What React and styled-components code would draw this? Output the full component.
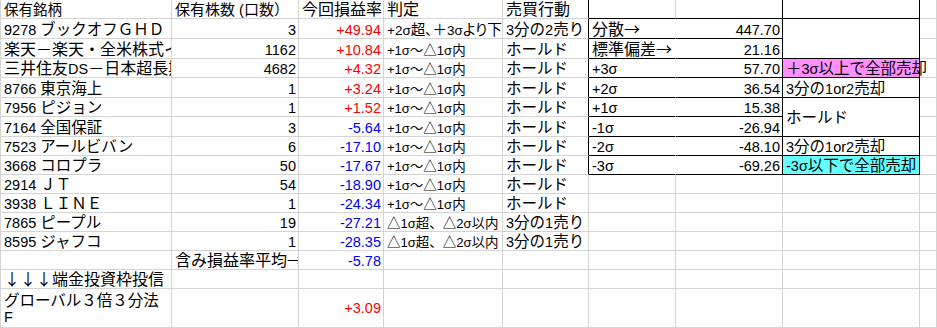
import React from 'react';
import styled, { createGlobalStyle } from 'styled-components';

const GRID = '#d4d4d4';
const K = '#000000';
const RED = '#ff0000';
const BLUE = '#0000ff';
const PINK = '#ff8fff';
const CYAN = '#66ffff';

const Global = createGlobalStyle`
  html, body { margin: 0; padding: 0; background: #ffffff; }
  body {
    font-family: "Liberation Sans", "Noto Sans CJK JP", sans-serif;
    font-size: 14.5px;
    color: #000;
  }
`;

const Sheet = styled.div`
  display: grid;
  width: 937px;
  height: 328px;
  box-sizing: border-box;
  border-left: 1px solid ${GRID};
  grid-template-columns: 171px 127px 85px 119px 86px 87px 107px 137px 1fr;
  grid-template-rows: 19px 20px 20px 19px 20px 19px 20px 19px 19px 19px 19px 19px 19px 19px 19px 39px;
  overflow: hidden;
`;

const Cell = styled.div`
  box-sizing: border-box;
  grid-row: span ${(p) => p.$rows || 1};
  display: flex;
  min-width: 0;
  align-items: ${(p) => (p.$v === 'center' ? 'center' : 'flex-end')};
  justify-content: ${(p) => (p.$align === 'right' ? 'flex-end' : 'flex-start')};
  padding: 0 2px 0 ${(p) => (p.$align === 'right' ? 2 : 3)}px;
  border-right: 1px solid ${(p) => p.$rb || GRID};
  border-bottom: 1px solid ${(p) => p.$bb || GRID};
  background: ${(p) => p.$bg || 'transparent'};
  color: ${(p) => p.$color || '#000'};
  font-size: ${(p) => p.$size || 14.5}px;
  line-height: ${(p) => p.$lh || 15}px;
  white-space: nowrap;
  overflow: ${(p) => (p.$spill ? 'visible' : 'hidden')};
`;

const Text = styled.span`
  display: block;
  flex: none;
  white-space: nowrap;
`;

const Wide = styled.span`
  font-family: "Noto Sans CJK JP", sans-serif;
  font-size: ${(p) => p.$size}px;
  font-feature-settings: ${(p) => (p.$palt ? '"palt" 1' : 'normal')};
`;

const CJK_RE = /([\u2190-\u21ff\u25a0-\u25ff\u3000-\u30ff\u4e00-\u9fff\uff00-\uffef]+)/;

const mix = (text, size = 15.5, palt = false) =>
  typeof text === 'string'
    ? text.split(CJK_RE).map((part, i) =>
        i % 2 ? (
          <Wide key={i} $size={size} $palt={palt}>
            {part}
          </Wide>
        ) : (
          part
        )
      )
    : text;

const c = (t, o = {}) => ({ t, ...o });

const stocks = [
  ['9278 ブックオフＧＨＤ', '3', '+49.94', RED, '+2σ超、＋3σより下', '3分の2売り'],
  ['楽天－楽天・全米株式インデックス・ファンド', '1162', '+10.84', RED, '+1σ～△1σ内', 'ホールド'],
  ['三井住友DS－日本超長期国債ファンド', '4682', '+4.32', RED, '+1σ～△1σ内', 'ホールド'],
  ['8766 東京海上', '1', '+3.24', RED, '+1σ～△1σ内', 'ホールド'],
  ['7956 ピジョン', '1', '+1.52', RED, '+1σ～△1σ内', 'ホールド'],
  ['7164 全国保証', '3', '-5.64', BLUE, '+1σ～△1σ内', 'ホールド'],
  ['7523 アールビバン', '6', '-17.10', BLUE, '+1σ～△1σ内', 'ホールド'],
  ['3668 コロプラ', '50', '-17.67', BLUE, '+1σ～△1σ内', 'ホールド'],
  ['2914 ＪＴ', '54', '-18.90', BLUE, '+1σ～△1σ内', 'ホールド'],
  ['3938 ＬＩＮＥ', '1', '-24.34', BLUE, '+1σ～△1σ内', 'ホールド'],
  ['7865 ピープル', '19', '-27.21', BLUE, '△1σ超、△2σ以内', '3分の1売り'],
  ['8595 ジャフコ', '1', '-28.35', BLUE, '△1σ超、△2σ以内', '3分の1売り'],
];

const tb = { $rb: '#ffffff', $bb: K };
const tv = { $align: 'right', $rb: K, $bb: K };
const th = { $rb: K, $bb: K };

const rightTable = [
  [c('分散→', { ...tb, $cjk: 16 }), c('447.70', tv), c('', { ...th, $rows: 2 }), c('')],
  [c('標準偏差→', { ...tb, $cjk: 16 }), c('21.16', tv), c('')],
  [c('+3σ', tb), c('57.70', tv), c('＋3σ以上で全部売却', { ...th, $bg: PINK, $spill: true }), c('')],
  [c('+2σ', tb), c('36.54', tv), c('3分の1or2売却', th), c('')],
  [c('+1σ', tb), c('15.38', tv), c('ホールド', { ...th, $rows: 2, $v: 'center' }), c('')],
  [c('-1σ', tb), c('-26.94', tv), c('')],
  [c('-2σ', tb), c('-48.10', tv), c('3分の1or2売却', th), c('')],
  [c('-3σ', tb), c('-69.26', tv), c('-3σ以下で全部売却', { ...th, $bg: CYAN }), c('')],
];

const blank4 = () => [c(''), c(''), c(''), c('')];

const judge = (i) =>
  i === 0 ? { $size: 13.5, $cjk: 14.5, $palt: true } : { $size: 13, $cjk: 13.5 };

const rows = [
  [
    c('保有銘柄', { $cjk: 14.5 }),
    c('保有株数 (口数）', { $cjk: 15 }),
    c('今回損益率', { $cjk: 16 }),
    c('判定', { $cjk: 16 }),
    c('売買行動', { $rb: K, $cjk: 16 }),
    c('', { $bb: K }),
    c('', { $rb: K, $bb: K }),
    c('', { $rb: K, $bb: K }),
    c(''),
  ],
  ...stocks.map(([a, b, pct, col, d, e], i) => [
    c(a, i === 1 || i === 2 ? { $cjk: 16 } : {}),
    c(b, { $align: 'right' }),
    c(pct, { $align: 'right', $color: col }),
    c(d, judge(i)),
    c(e, i < 8 ? { $rb: K } : {}),
    ...(i < 8 ? rightTable[i] : blank4()),
  ]),
  [
    c(''),
    c('含み損益率平均→', { $cjk: 16 }),
    c('-5.78', { $align: 'right', $color: BLUE }),
    c(''),
    c(''),
    ...blank4(),
  ],
  [c('↓↓↓端金投資枠投信', { $cjk: 16 }), c(''), c(''), c(''), c(''), ...blank4()],
  [
    c(
      <>
        <Wide $size={15.5}>グローバル３倍３分法</Wide>
        <br />F
      </>,
      { $v: 'center', $lh: 16.5 }
    ),
    c(''),
    c('+3.09', { $align: 'right', $color: RED, $v: 'center' }),
    c(''),
    c(''),
    ...blank4(),
  ],
];

export default function App() {
  return (
    <>
      <Global />
      <Sheet>
        {rows.map((row, ri) =>
          row.map(({ t, $cjk, $palt, ...props }, ci) => (
            <Cell key={`${ri}-${ci}`} {...props}>
              {t !== '' && <Text>{mix(t, $cjk, $palt)}</Text>}
            </Cell>
          ))
        )}
      </Sheet>
    </>
  );
}
